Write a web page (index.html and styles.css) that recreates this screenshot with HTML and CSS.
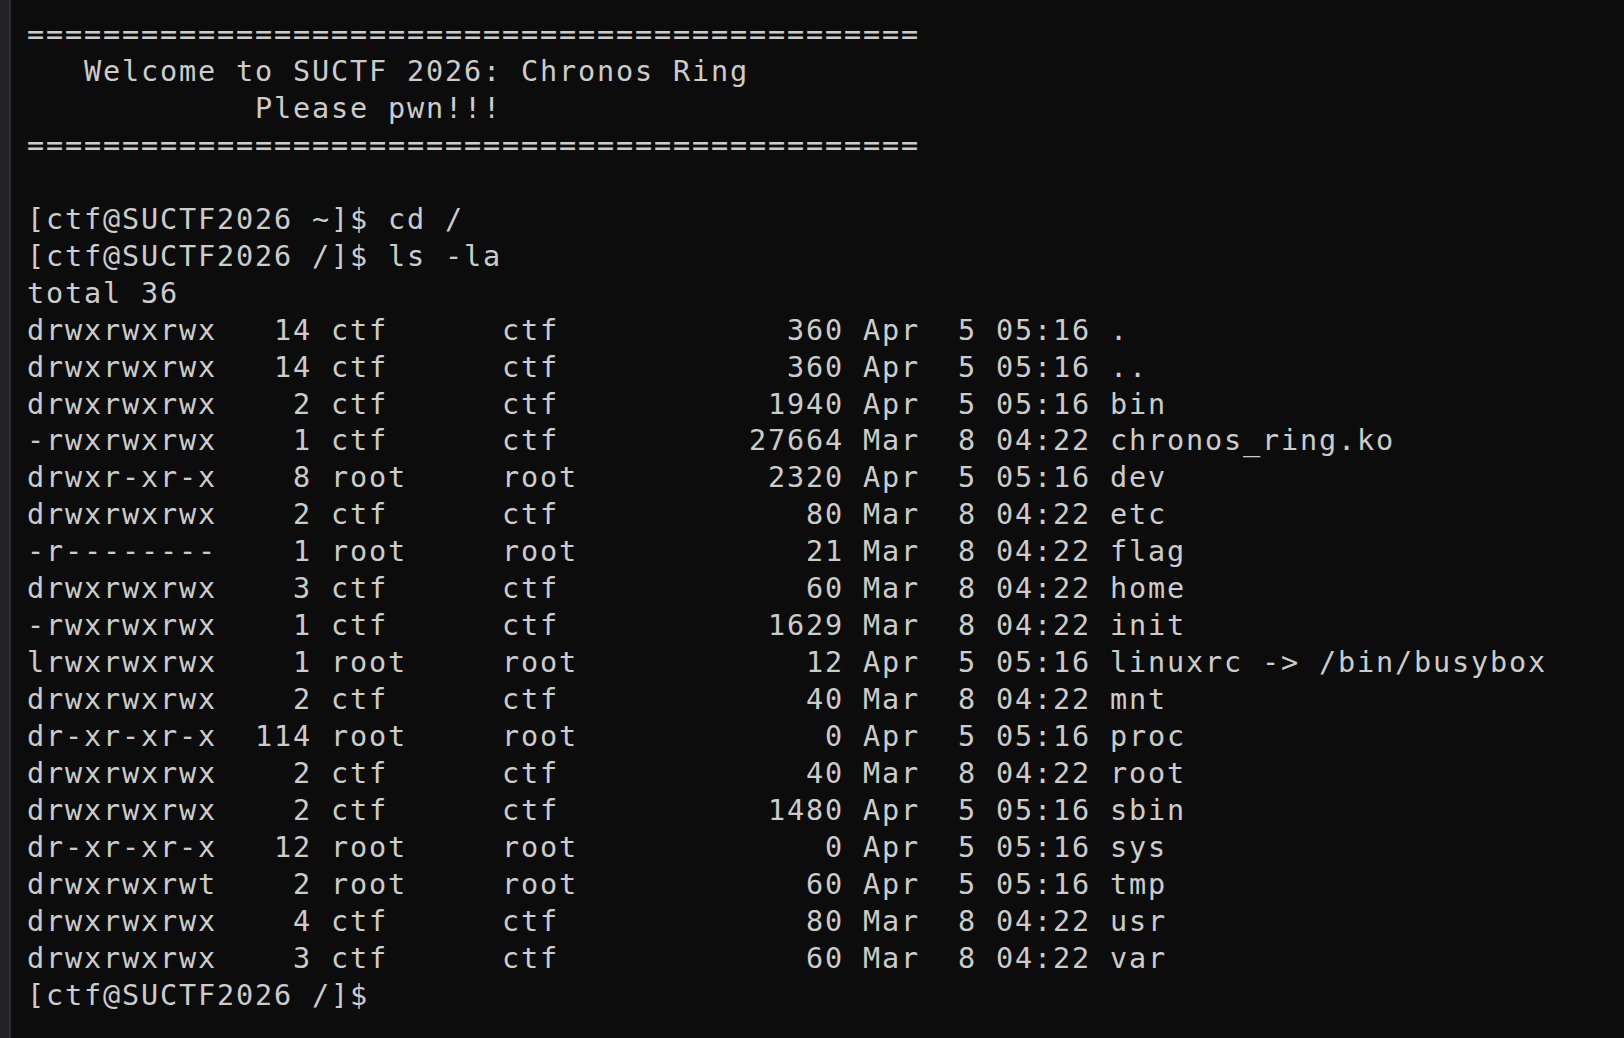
FILE: index.html
```html
<!DOCTYPE html>
<html lang="en">
<head>
<meta charset="utf-8">
<title>SUCTF 2026: Chronos Ring</title>
<link rel="stylesheet" href="styles.css">
</head>
<body>
<div class="window">
  <div class="gutter"></div>
  <pre class="terminal">===============================================
   Welcome to SUCTF 2026: Chronos Ring
            Please pwn!!!
===============================================

[ctf@SUCTF2026 ~]$ cd /
[ctf@SUCTF2026 /]$ ls -la
total 36
drwxrwxrwx   14 ctf      ctf            360 Apr  5 05:16 .
drwxrwxrwx   14 ctf      ctf            360 Apr  5 05:16 ..
drwxrwxrwx    2 ctf      ctf           1940 Apr  5 05:16 bin
-rwxrwxrwx    1 ctf      ctf          27664 Mar  8 04:22 chronos_ring.ko
drwxr-xr-x    8 root     root          2320 Apr  5 05:16 dev
drwxrwxrwx    2 ctf      ctf             80 Mar  8 04:22 etc
-r--------    1 root     root            21 Mar  8 04:22 flag
drwxrwxrwx    3 ctf      ctf             60 Mar  8 04:22 home
-rwxrwxrwx    1 ctf      ctf           1629 Mar  8 04:22 init
lrwxrwxrwx    1 root     root            12 Apr  5 05:16 linuxrc -&gt; /bin/busybox
drwxrwxrwx    2 ctf      ctf             40 Mar  8 04:22 mnt
dr-xr-xr-x  114 root     root             0 Apr  5 05:16 proc
drwxrwxrwx    2 ctf      ctf             40 Mar  8 04:22 root
drwxrwxrwx    2 ctf      ctf           1480 Apr  5 05:16 sbin
dr-xr-xr-x   12 root     root             0 Apr  5 05:16 sys
drwxrwxrwt    2 root     root            60 Apr  5 05:16 tmp
drwxrwxrwx    4 ctf      ctf             80 Mar  8 04:22 usr
drwxrwxrwx    3 ctf      ctf             60 Mar  8 04:22 var
[ctf@SUCTF2026 /]$ </pre>
</div>
</body>
</html>
```
FILE: styles.css
```css
html, body {
  margin: 0;
  padding: 0;
  height: 100%;
  background: #0c0c0c;
  overflow: hidden;
}

.window {
  display: flex;
  height: 100%;
}

.gutter {
  width: 9px;
  flex: 0 0 9px;
  background: #232428;
  border-right: 2px solid #2e2f33;
}

.terminal {
  flex: 1;
  margin: 0;
  padding: 17px 0 0 16px;
  font-family: "DejaVu Sans Mono", monospace;
  font-size: 28.5px;
  letter-spacing: 1.842px;
  line-height: 36.95px;
  color: #cccccc;
  white-space: pre;
}
```
